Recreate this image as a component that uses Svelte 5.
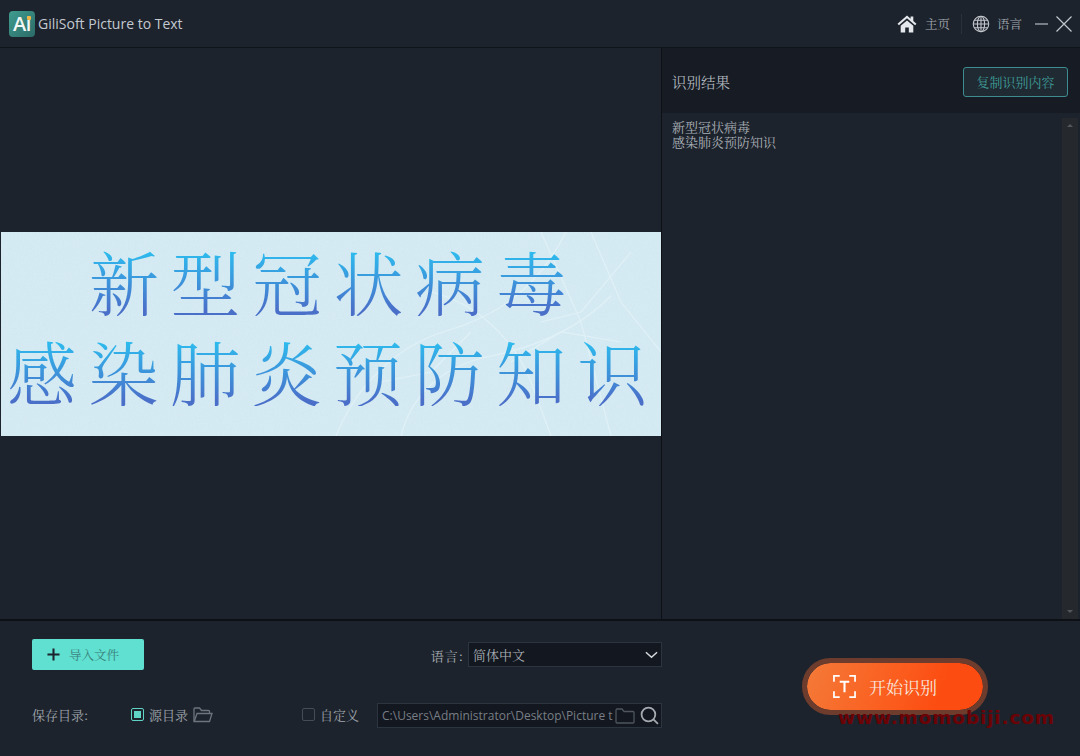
<script>
  const line1 = ['新', '型', '冠', '状', '病', '毒'];
  const line2 = ['感', '染', '肺', '炎', '预', '防', '知', '识'];
</script>

<div class="window">
  <header class="titlebar">
    <div class="brand">
      <div class="logo"><span>Ai</span><i></i></div>
      <span class="app-name">GiliSoft Picture to Text</span>
    </div>
    <div class="actions">
      <svg class="home" viewBox="0 0 22 20" width="20" height="18" aria-hidden="true">
        <path fill="#e4e8ec" d="M11 0.5 0.5 9.8 2 11.4 11 3.6l9 7.8 1.5-1.6L18 6.7V1.6h-3v2.5zM4 12v7.5h5v-5.5h4v5.5h5V12l-7-6z"/>
      </svg>
      <span class="act-text home-text">主页</span>
      <span class="sep"></span>
      <svg class="globe" viewBox="0 0 20 20" width="18" height="18" fill="none" stroke="#c3c8ce" stroke-width="1.2" aria-hidden="true">
        <circle cx="10" cy="10" r="8.6"/>
        <ellipse cx="10" cy="10" rx="4" ry="8.6"/>
        <path d="M10 1.4v17.2M1.4 10h17.2M2.6 5.8h14.8M2.6 14.2h14.8"/>
      </svg>
      <span class="act-text lang-text">语言</span>
      <svg class="win-min" viewBox="0 0 13 2" width="13" height="2" aria-hidden="true"><path d="M0 1h13" stroke="#b5bac0" stroke-width="1.2"/></svg>
      <svg class="win-close" viewBox="0 0 16 16" width="16" height="16" aria-hidden="true"><path d="M0.5 0.5l15 15M15.5 0.5l-15 15" stroke="#c3c8ce" stroke-width="1.2"/></svg>
    </div>
  </header>

  <main class="workspace">
    <section class="preview">
      <div class="picture">
        <svg class="map" viewBox="0 0 660 204" preserveAspectRatio="none" aria-hidden="true">
          <defs>
            <filter id="paper" x="0" y="0" width="100%" height="100%">
              <feTurbulence type="fractalNoise" baseFrequency="0.55" numOctaves="2" seed="4"/>
              <feColorMatrix type="matrix" values="0 0 0 0 0.55  0 0 0 0 0.72  0 0 0 0 0.8  0 0 0 0.28 0"/>
            </filter>
          </defs>
          <rect width="660" height="204" filter="url(#paper)"/>
          <g fill="none" stroke="#e0f1f7" stroke-width="1.2">
            <path d="M335 204c20-50 60-90 110-105s90-40 120-99"/>
            <path d="M400 204c10-40 40-70 90-80s90-30 120-60"/>
            <path d="M430 60c40 10 80 40 100 90l20 54"/>
            <path d="M540 0l40 90 30 114"/>
            <path d="M590 0l30 70 40 50"/>
            <path d="M470 100l-40 40-50 10M510 130l50-30 60 10"/>
            <path d="M630 20l-50 60-40 10"/>
          </g>
        </svg>
        <div class="pic-line first">
          {#each line1 as ch}<span>{ch}</span>{/each}
        </div>
        <div class="pic-line">
          {#each line2 as ch}<span>{ch}</span>{/each}
        </div>
      </div>
    </section>

    <aside class="result">
      <div class="result-head">
        <span class="result-title">识别结果</span>
        <button class="copy">复制识别内容</button>
      </div>
      <div class="result-body">
        <div class="result-text">新型冠状病毒<br />感染肺炎预防知识</div>
        <div class="scrollbar">
          <span class="arrow up"></span>
          <span class="arrow down"></span>
        </div>
      </div>
    </aside>
  </main>

  <footer class="bottom">
    <div class="controls">
      <div class="row top-row">
        <button class="import">
          <svg viewBox="0 0 14 14" width="13" height="13" aria-hidden="true"><path d="M7 0.5v13M0.5 7h13" stroke="#1d232c" stroke-width="2.2"/></svg>
          <span>导入文件</span>
        </button>
        <div class="language">
          <span class="lang-label">语言:</span>
          <div class="select">
            <span>简体中文</span>
            <svg viewBox="0 0 14 8" width="13" height="8" aria-hidden="true"><path d="M1 1l6 5.500L13 1" fill="none" stroke="#d5d9dd" stroke-width="1.6"/></svg>
          </div>
        </div>
      </div>
      <div class="row save-row">
        <span class="save-label">保存目录:</span>
        <span class="radio on"><i></i></span>
        <span class="opt">源目录</span>
        <svg class="open-folder" viewBox="0 0 20 16" width="20" height="16" fill="none" stroke="#6d747c" stroke-width="1.3" aria-hidden="true">
          <path d="M1 14.500V2q0-1 1-1h4.500l2 2.500h7q1 0 1 1V6.500"/>
          <path d="M1.200 14.500 4 6.500h15l-2.500 8z"/>
        </svg>
        <span class="radio custom"></span>
        <span class="opt">自定义</span>
        <div class="path">
          <span class="path-text">C:\Users\Administrator\Desktop\Picture t</span>
          <svg class="path-folder" viewBox="0 0 20 16" width="20" height="16" fill="none" stroke="#4f565e" stroke-width="1.3" aria-hidden="true">
            <path d="M1 3q0-2 1-2h5l2 2.500h9q1 0 1 1V14q0 1-1 1H2q-1 0-1-1z"/>
          </svg>
          <svg class="path-search" viewBox="0 0 18 18" width="19" height="19" fill="none" stroke="#a4aab0" stroke-width="1.700" aria-hidden="true">
            <circle cx="8" cy="8" r="6.500"/><path d="M12.500 12.500 17 17"/>
          </svg>
        </div>
      </div>
    </div>
    <div class="start-wrap">
      <button class="start">
        <svg viewBox="0 0 24 24" width="23" height="23" fill="none" stroke="#fff" aria-hidden="true">
          <path stroke-width="1.800" d="M1 7V1h6M17 1h6v6M1 17v6h6M23 17v6h-6"/>
          <path stroke-width="2.200" d="M7 7h10M12 7v11"/>
        </svg>
        <span>开始识别</span>
      </button>
    </div>
  </footer>

  <div class="watermark">www.momobiji.com</div>
</div>

<style>
  :global(body) {
    margin: 0;
    background: #1d232c;
  }

  .window {
    position: relative;
    width: 1080px;
    height: 756px;
    display: flex;
    flex-direction: column;
    overflow: hidden;
    background: #1d232c;
    font-family: "Noto Serif CJK SC", "Noto Sans CJK SC", "Liberation Serif", serif;
    color: #a9afb6;
  }

  button {
    font-family: inherit;
    cursor: pointer;
    padding: 0;
  }

  .titlebar {
    height: 48px;
    flex: none;
    display: flex;
    align-items: center;
    justify-content: space-between;
    box-sizing: border-box;
    padding: 0 8px 0 9px;
    border-bottom: 1px solid #10141b;
  }

  .brand {
    display: flex;
    align-items: center;
    gap: 3px;
  }

  .logo {
    position: relative;
    width: 26px;
    height: 26px;
    border-radius: 4px;
    background: linear-gradient(135deg, #3f9d8f, #2c6a68);
    display: flex;
    align-items: center;
    justify-content: center;
  }

  .logo span {
    font-family: "Open Sans", sans-serif;
    font-weight: 600;
    font-size: 20px;
    line-height: 26px;
    color: #f2f6f5;
    letter-spacing: -0.5px;
  }

  .logo i {
    position: absolute;
    top: 5px;
    right: 4px;
    width: 4px;
    height: 4px;
    background: #f1b544;
    border-radius: 1px;
  }

  .app-name {
    font-family: "Open Sans", "Noto Sans", sans-serif;
    font-size: 14px;
    color: #c3c9d0;
  }

  .actions {
    display: flex;
    align-items: center;
  }

  .act-text {
    font-size: 12.500px;
    color: #a4aab0;
  }

  .home-text {
    margin-left: 8px;
  }

  .sep {
    width: 1px;
    height: 20px;
    background: #2a313a;
    margin: 0 10px 0 11px;
  }

  .lang-text {
    margin-left: 7px;
  }

  .win-min {
    margin-left: 13px;
  }

  .win-close {
    margin-left: 8px;
  }

  .workspace {
    height: 571px;
    flex: none;
    display: flex;
    border-bottom: 2px solid #0d1015;
  }

  .preview {
    width: 661px;
    flex: none;
    display: flex;
    flex-direction: column;
    justify-content: center;
    align-items: flex-end;
  }

  .picture {
    position: relative;
    width: 660px;
    height: 204px;
    margin-top: 1px;
    background: #d7ecf4;
    display: flex;
    flex-direction: column;
  }

  .map {
    position: absolute;
    inset: 0;
    width: 100%;
    height: 100%;
  }

  .pic-line {
    position: relative;
    display: flex;
    gap: 11.500px;
    padding-left: 6px;
    margin-top: 20px;
    font-size: 70px;
    line-height: 70px;
    height: 70px;
    font-weight: 300;
  }

  .pic-line.first {
    padding-left: 88px;
    margin-top: 14px;
  }

  .pic-line span {
    width: 70px;
    background: linear-gradient(180deg, #2dbcee 8%, #4a6fc9 92%);
    -webkit-background-clip: text;
    background-clip: text;
    color: transparent;
  }

  .result {
    flex: 1;
    display: flex;
    flex-direction: column;
    border-left: 1px solid #0d1015;
    min-width: 0;
  }

  .result-head {
    height: 65px;
    flex: none;
    display: flex;
    align-items: center;
    justify-content: space-between;
    box-sizing: border-box;
    padding: 2px 12px 0 10px;
    background: #161b24;
  }

  .result-title {
    font-size: 14.500px;
    color: #b0b6bc;
  }

  .copy {
    width: 105px;
    height: 30px;
    background: #1f2a32;
    border: 1.500px solid #3d8c8f;
    border-radius: 3px;
    color: #3f9d9a;
    font-size: 13px;
  }

  .result-body {
    flex: 1;
    display: flex;
    justify-content: space-between;
    min-height: 0;
    padding-right: 2px;
  }

  .result-text {
    padding: 6px 0 0 10px;
    font-size: 13px;
    line-height: 15px;
    color: #a9afb6;
  }

  .scrollbar {
    width: 16px;
    margin-top: 5px;
    background: #25282c;
    display: flex;
    flex-direction: column;
    justify-content: space-between;
    align-items: center;
    padding: 6px 0;
    box-sizing: border-box;
  }

  .arrow {
    width: 0;
    height: 0;
    border-left: 3.500px solid transparent;
    border-right: 3.500px solid transparent;
  }

  .arrow.up {
    border-bottom: 3.500px solid #54585d;
  }

  .arrow.down {
    border-top: 3.500px solid #54585d;
  }

  .bottom {
    flex: 1;
    display: flex;
    min-height: 0;
  }

  .controls {
    width: 662px;
    flex: none;
    box-sizing: border-box;
    padding: 18px 0 0 32px;
    display: flex;
    flex-direction: column;
  }

  .row {
    display: flex;
    align-items: center;
  }

  .top-row {
    justify-content: space-between;
    height: 31px;
  }

  .import {
    width: 112px;
    height: 31px;
    display: flex;
    align-items: center;
    gap: 9px;
    padding-left: 15px;
    box-sizing: border-box;
    background: #5fe0d0;
    border: none;
    border-radius: 2px;
  }

  .import span {
    font-size: 12.500px;
    color: #3a7f79;
  }

  .language {
    display: flex;
    align-items: center;
    gap: 4px;
  }

  .lang-label {
    font-size: 13px;
    letter-spacing: 1px;
    color: #a9afb6;
    margin-top: 2px;
  }

  .select {
    width: 194px;
    height: 25px;
    box-sizing: border-box;
    display: flex;
    align-items: center;
    justify-content: space-between;
    padding: 0 2px 0 4px;
    background: #13171f;
    border: 1px solid #2c3440;
    font-size: 13px;
    color: #a9afb6;
  }

  .select svg {
    margin-right: 1px;
  }

  .save-row {
    margin-top: 31px;
    height: 27px;
  }

  .save-label {
    width: 99px;
    font-size: 13px;
    color: #a0a6ac;
  }

  .radio {
    width: 13px;
    height: 13px;
    box-sizing: border-box;
    flex: none;
    border-radius: 2px;
    border: 1.500px solid #454c55;
    display: flex;
    align-items: center;
    justify-content: center;
  }

  .radio.on {
    border-color: #5fd3c6;
  }

  .radio.on i {
    width: 7px;
    height: 7px;
    background: #5fd3c6;
  }

  .radio.custom {
    margin-left: 89px;
  }

  .opt {
    margin-left: 5px;
    font-size: 13px;
    color: #a0a6ac;
  }

  .open-folder {
    margin-left: 5px;
  }

  .path {
    margin-left: 18px;
    margin-top: 2px;
    width: 285px;
    height: 25px;
    box-sizing: border-box;
    display: flex;
    align-items: center;
    padding-left: 4px;
    background: #13171f;
    border: 1px solid #2c3440;
  }

  .path-text {
    width: 232px;
    flex: none;
    overflow: hidden;
    white-space: nowrap;
    font-family: "Open Sans", "Noto Sans", sans-serif;
    font-size: 12px;
    color: #787e85;
  }

  .path-folder {
    margin-left: 1px;
  }

  .path-search {
    margin-left: 5px;
  }

  .start-wrap {
    flex: 1;
    display: flex;
    align-items: flex-start;
    padding: 37px 0 0 140px;
    box-sizing: border-box;
  }

  .start {
    width: 186px;
    height: 57px;
    box-sizing: border-box;
    border: 5px solid #6d3c2d;
    border-radius: 29px;
    background: linear-gradient(110deg, #f47a38 0%, #fb5d1e 50%, #fc4c12 75%);
    background-clip: padding-box;
    display: flex;
    align-items: center;
    padding-left: 26px;
    gap: 13px;
    color: #f8e6dc;
  }

  .start span {
    font-size: 17px;
  }

  .watermark {
    position: absolute;
    left: 838px;
    top: 707px;
    font-family: "DejaVu Sans", sans-serif;
    font-weight: 700;
    font-size: 18.500px;
    letter-spacing: 0.850px;
    color: #6b0205;
    white-space: nowrap;
  }
</style>
